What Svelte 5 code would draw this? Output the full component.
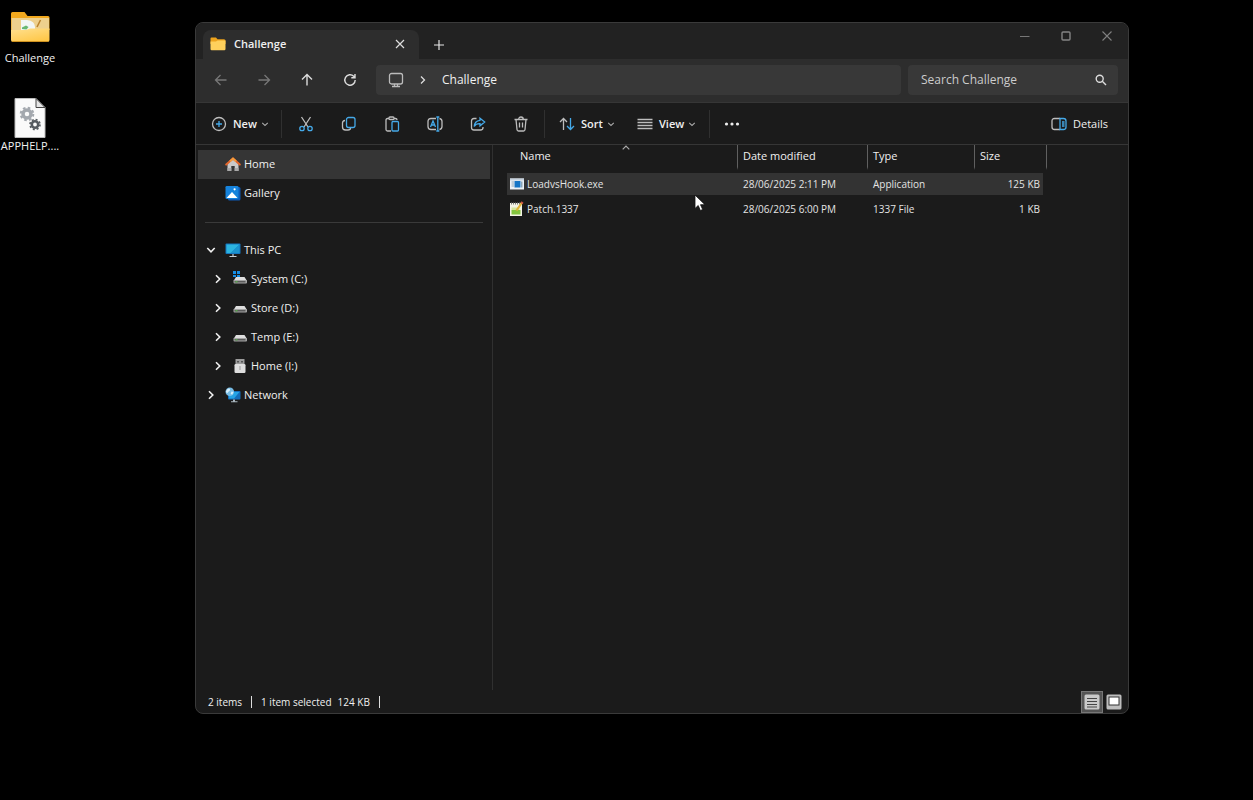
<script>
  let query = $state('');
  const drives = [
    { name: 'System (C:)', kind: 'system' },
    { name: 'Store (D:)', kind: 'drive' },
    { name: 'Temp (E:)', kind: 'drive' },
    { name: 'Home (I:)', kind: 'usb' }
  ];
  const files = [
    { name: 'LoadvsHook.exe', date: '28/06/2025 2:11 PM', type: 'Application', size: '125 KB', kind: 'exe' },
    { name: 'Patch.1337', date: '28/06/2025 6:00 PM', type: '1337 File', size: '1 KB', kind: 'note' }
  ];
  let selected = $state(0);
</script>

{#snippet chevron(dir)}
  <svg class="chev" width="10" height="10" viewBox="0 0 10 10" fill="none" stroke="currentColor" stroke-width="1.6">
    {#if dir === 'down'}<path d="M1.3 3 5 6.8 8.7 3" />{:else}<path d="M3 1.3 6.8 5 3 8.7" />{/if}
  </svg>
{/snippet}

{#snippet smallChevron()}
  <svg width="8" height="8" viewBox="0 0 8 8" fill="none" stroke="#aaa" stroke-width="1.1"><path d="M1.2 2.8 4 5.4 6.8 2.8" /></svg>
{/snippet}

{#snippet placeIcon(kind)}
  <svg width="16" height="16" viewBox="0 0 16 16">
    {#if kind === 'home'}
      <path d="M2.5 7.5 8 3l5.500 4.500V15H9.700V10H6.300V15H2.500Z" fill="#c9c9c9" />
      <path d="M2.500 12h3.800v3H2.500ZM9.700 12h3.800v3H9.700Z" fill="#a9a9a9" />
      <path d="M1.200 8.600 8 2.500l6.800 6.100" fill="none" stroke="#e2652b" stroke-width="2" stroke-linecap="round" />
      <path d="M5 5.200 8 2.500l3 2.700" fill="none" stroke="#f59a3c" stroke-width="2" />
    {:else if kind === 'gallery'}
      <rect x="3" y="2" width="12.500" height="13.500" rx="1.500" fill="#0d5bb8" />
      <rect x="0.500" y="1" width="13" height="13" rx="1.300" fill="#1683dc" />
      <path d="M1.500 13 7 7l5.500 6Z" fill="#fff" /><circle cx="9.600" cy="4.300" r="1.100" fill="#fff" />
    {:else if kind === 'pc'}
      <rect x="0.500" y="1.500" width="15" height="10.500" rx="1" fill="#1577c0" />
      <path d="M1.500 2.500h13L10 7 6 11H1.500Z" fill="#2cb4e0" /><path d="M14.500 2.500 5.500 11h9Z" fill="#1b94cf" />
      <path d="M7 12h2v2H7Z" fill="#7b8790" /><path d="M4.500 14h7v1h-7Z" fill="#c7d0d6" />
    {:else if kind === 'net'}
      <rect x="3" y="4" width="12.500" height="8.500" rx="1" fill="#126dbb" />
      <path d="M4 5h10.500L9 11.500H4Z" fill="#25a4e6" />
      <path d="M8 12.500h2v2H8ZM6 14.300h6.500v1H6Z" fill="#a9b6bf" />
      <circle cx="4.800" cy="4.800" r="4.300" fill="#77bce5" /><path d="M2 2.500c2-1.500 3-1 3 .5S3.500 4 2.800 5.500.8 5 1 4.500ZM6.500 4.500l2 .5-1.300 2.800-1.500-1Z" fill="#d6effc" />
    {:else if kind === 'usb'}
      <rect x="3.500" y="1" width="9" height="6" fill="#9c9c9c" /><path d="M5 3h2v1.500H5ZM9 3h2v1.500H9Z" fill="#555" />
      <rect x="2.500" y="6" width="11" height="9" rx="1.200" fill="#dedede" /><path d="M8 8v4" stroke="#999" />
    {:else}
      {#if kind === 'system'}<path d="M1 0h3v3H1ZM5 0h3v3H5ZM1 4h3v2H1ZM5 4h3v2H5Z" fill="#168ee6" />{/if}
      <path d="M4 6h8.500l2.500 4H1.500Z" fill="#dedede" />
      <rect x="1.500" y="9" width="13.500" height="3.500" rx="1" fill="#a6a6a6" />
      <path d="M2.500 10h11v1.500h-11Z" fill="#5a5a5a" /><path d="M3.500 10h2v1.500h-2Z" fill="#58a34d" />
    {/if}
  </svg>
{/snippet}

<main class="desktop">
  <div class="shortcuts">
    <button class="shortcut">
      <svg width="40" height="40" viewBox="0 0 40 40">
        <path d="M1 3.500Q1 2 2.500 2h12l3 4H38q1.500 0 1.500 1.500V20H1Z" fill="#f2a81d" />
        <rect x="1.500" y="8" width="37.500" height="20" fill="#eed08d" />
        <path d="M11 10h6q8 1 8 7v4H11Z" fill="#f2f6f5" /><path d="M12 17.500l4-2 2.500 1.500-2 2.500-4.500-.5Z" fill="#68b873" />
        <path d="m27 17 3.500-7" stroke="#b9822c" stroke-width="1.500" />
        <path d="M1 20h15l4-1.500h19.500V30q0 2-2 2h-34.500Q1 32 1 30Z" fill="url(#deskfolder)" />
        <path d="M2 31.500h36" stroke="#cf9220" />
        <defs><linearGradient id="deskfolder" x2="0.600" y2="1"><stop stop-color="#ffe08f" /><stop offset="1" stop-color="#ffc84a" /></linearGradient></defs>
      </svg>
      <span>Challenge</span>
    </button>
    <button class="shortcut">
      <svg width="32" height="40" viewBox="0 0 32 40">
        <path d="M1 .5h21l9 9v30H1Z" fill="#fafafa" stroke="#bbb" />
        <path d="M22 .5 31 9.500h-9Z" fill="#e6e6e6" stroke="#444" />
        <circle cx="13" cy="16" r="4" fill="none" stroke="#a3a8ae" stroke-width="3.500" />
        <circle cx="13" cy="16" r="6.300" fill="none" stroke="#a3a8ae" stroke-width="2" stroke-dasharray="2.600 2.350" />
        <circle cx="21" cy="26.500" r="3.200" fill="none" stroke="#555b60" stroke-width="2.600" />
        <circle cx="21" cy="26.500" r="5" fill="none" stroke="#555b60" stroke-width="1.600" stroke-dasharray="2 1.930" />
      </svg>
      <span>APPHELP....</span>
    </button>
  </div>

  <section class="window" aria-label="File Explorer">
    <header class="titlebar">
      <div class="tab">
        <svg width="16" height="14" viewBox="0 0 16 14"><path d="M.5 1.500Q.5.500 1.500.500H6L7.500 2.300H14q1.500 0 1.500 1.500V7H.5Z" fill="#eda31d" /><path d="M.5 4.500H6L7.500 3.500H15.500V12q0 1.200-1.200 1.200H1.700Q.5 13.200.5 12Z" fill="#ffd05c" /></svg>
        <strong>Challenge</strong>
        <button class="plain" aria-label="Close tab"><svg width="10" height="10" viewBox="0 0 10 10" stroke="#ddd" stroke-width="1.200"><path d="m1 1 8 8M9 1 1 9" /></svg></button>
      </div>
      <button class="plain newtab" aria-label="New tab"><svg width="10" height="10" viewBox="0 0 10 10" stroke="#e6e6e6" stroke-width="1.200"><path d="M5 0v10M0 5h10" /></svg></button>
      <div class="controls">
        <button class="plain" aria-label="Minimize"><svg width="10" height="10" viewBox="0 0 10 10"><path d="M0 5.500h9.500" stroke="#777" /></svg></button>
        <button class="plain" aria-label="Maximize"><svg width="10" height="10" viewBox="0 0 10 10"><rect x="1" y="1" width="8" height="8" rx="1" fill="none" stroke="#858585" stroke-width="1.400" /></svg></button>
        <button class="plain" aria-label="Close"><svg width="10" height="10" viewBox="0 0 10 10"><path d="m.5.500 9 9M9.500.500l-9 9" stroke="#808080" stroke-width="1.100" /></svg></button>
      </div>
    </header>

    <div class="navbar">
      <div class="arrows">
        <button class="plain" aria-label="Back"><svg width="14" height="14" viewBox="0 0 14 14" class="line dim"><path d="M12.500 7H1.500M6.500 2l-5 5 5 5" /></svg></button>
        <button class="plain" aria-label="Forward"><svg width="14" height="14" viewBox="0 0 14 14" class="line dim"><path d="M1.500 7h11M7.500 2l5 5-5 5" /></svg></button>
        <button class="plain" aria-label="Up"><svg width="14" height="14" viewBox="0 0 14 14" class="line bright"><path d="M7 12.500V1.500M2 6.500l5-5 5 5" /></svg></button>
        <button class="plain" aria-label="Refresh"><svg width="14" height="14" viewBox="0 0 14 14" class="line bright"><path d="M12.200 7A5.200 5.200 0 1 1 10.700 3.300L12 4.600M12 1v3.700H8.300" /></svg></button>
      </div>
      <nav class="address" aria-label="Address">
        <svg width="16" height="16" viewBox="0 0 16 16" fill="none" stroke="#bbb" stroke-width="1.300"><rect x="1.500" y="1.500" width="13" height="10.500" rx="2" /><path d="M4 14.500h8M6.500 12v2.500M9.500 12v2.500" /></svg>
        <svg width="8" height="10" viewBox="0 0 8 10" fill="none" stroke="#ddd" stroke-width="1.300"><path d="m2 1.500 3.500 3.500L2 8.500" /></svg>
        <a href="#challenge">Challenge</a>
      </nav>
      <label class="search">
        <input type="text" placeholder="Search Challenge" aria-label="Search Challenge" bind:value={query} />
        <svg width="12" height="12" viewBox="0 0 12 12" fill="none" stroke="#ddd" stroke-width="1.400"><circle cx="4.700" cy="4.700" r="3.500" /><path d="m7.300 7.300 3.700 3.700" /></svg>
      </label>
    </div>

    <div class="toolbar">
      <button class="cmd new"><svg width="16" height="16" viewBox="0 0 16 16" class="line"><circle cx="8" cy="8" r="6.500" /><path d="M8 5v6M5 8h6" class="blue" /></svg>New {@render smallChevron()}</button>
      <i class="sep"></i>
      <div class="tools">
        <button class="plain" aria-label="Cut"><svg width="16" height="16" viewBox="0 0 16 16" class="line"><path d="m3.500 1 6.500 10M12.500 1 6 11" /><g class="blue"><circle cx="4" cy="12.500" r="2.200" /><circle cx="12" cy="12.500" r="2.200" /></g></svg></button>
        <button class="plain" aria-label="Copy"><svg width="16" height="16" viewBox="0 0 16 16" class="line"><path d="M4 4.500Q1.500 4.500 1.500 7v4Q1.500 14 4.500 14H7q2.500 0 2.500-2" /><rect x="5.500" y="1.500" width="8.500" height="10" rx="2" class="blue" /></svg></button>
        <button class="plain" aria-label="Paste"><svg width="16" height="16" viewBox="0 0 16 16" class="line"><path d="M5 2.500H3.500Q2 2.500 2 4v9.500Q2 15 3.500 15H7M10 2.500h1.500Q13 2.500 13 4" /><rect x="5" y="1" width="5" height="2.500" rx="1" /><rect x="8" y="5.500" width="6.500" height="9.500" rx="1" class="blue" /></svg></button>
        <button class="plain" aria-label="Rename"><svg width="16" height="16" viewBox="0 0 16 16" class="line"><path d="M9 2.500H4Q1 2.500 1 5.500v5q0 3 3 3h5M12.500 2.500q2.500.5 2.500 3v5q0 2.500-2.500 3" /><path d="M3.500 11 6 5l2.500 6M4.500 9h3M10.800 1v14M9.300 1h3M9.300 15h3" class="blue" /></svg></button>
        <button class="plain" aria-label="Share"><svg width="16" height="16" viewBox="0 0 16 16" class="line"><path d="M6.500 2.500H4Q1.500 2.500 1.500 5v6.500Q1.500 14 4 14h6.500q2.500 0 2.500-2.500V11" /><path d="M10 2.200 14.700 6 10 9.800V7.700Q6 7.500 4.200 10.500 4.500 5 10 4.300Z" class="blue" /></svg></button>
        <button class="plain" aria-label="Delete"><svg width="16" height="16" viewBox="0 0 16 16" class="line"><path d="M1.500 3.500h13M5.700 3.500Q5.700 1 8 1t2.300 2.500M3 3.500l1 10Q4.100 15 5.500 15h5q1.400 0 1.500-1.500l1-10M6.500 6.500v5M9.500 6.500v5" /></svg></button>
      </div>
      <i class="sep"></i>
      <button class="cmd sort"><svg width="16" height="16" viewBox="0 0 16 16" class="line"><path d="M4.500 14V2.500M1 6l3.500-3.500L8 6" /><path d="M11.500 2v11.500M8 10l3.500 3.500L15 10" class="blue" /></svg>Sort {@render smallChevron()}</button>
      <button class="cmd view"><svg width="16" height="16" viewBox="0 0 16 16" class="line"><path d="M0.500 3.500h15M0.500 6.500h15M0.500 9.500h15M0.500 12.500h15" /></svg>View {@render smallChevron()}</button>
      <i class="sep"></i>
      <button class="plain more" aria-label="See more"><svg width="16" height="4" viewBox="0 0 16 4" fill="#eee"><circle cx="2.500" cy="2" r="1.600" /><circle cx="8" cy="2" r="1.600" /><circle cx="13.500" cy="2" r="1.600" /></svg></button>
      <button class="cmd details"><svg width="16" height="16" viewBox="0 0 16 16" class="line"><path d="M9 2.500H3.500Q1 2.500 1 5v6q0 2.500 2.500 2.500H9" /><path d="M9 2.500h3.500Q15 2.500 15 5v6q0 2.500-2.500 2.500H9ZM11 6h2.500M11 8h2.500M11 10h2.500" class="blue" /></svg>Details</button>
    </div>

    <div class="body">
      <nav class="sidebar" aria-label="Navigation pane">
        <a class="place current" href="#home"><span class="twist"></span>{@render placeIcon('home')}Home</a>
        <a class="place" href="#gallery"><span class="twist"></span>{@render placeIcon('gallery')}Gallery</a>
        <hr />
        <a class="place" href="#pc"><span class="twist">{@render chevron('down')}</span>{@render placeIcon('pc')}This PC</a>
        {#each drives as d}
          <a class="place nested" href="#drive"><span class="twist">{@render chevron('right')}</span>{@render placeIcon(d.kind)}{d.name}</a>
        {/each}
        <a class="place" href="#network"><span class="twist">{@render chevron('right')}</span>{@render placeIcon('net')}Network</a>
      </nav>

      <div class="files">
        <svg class="sorted" width="8" height="5" viewBox="0 0 8 5" fill="none" stroke="#aaa" stroke-width="1.200"><path d="M.7 4.300 4 1l3.300 3.300" /></svg>
        <table>
          <colgroup><col class="c-name" /><col class="c-date" /><col class="c-type" /><col class="c-size" /></colgroup>
          <thead><tr><th>Name</th><th>Date modified</th><th>Type</th><th>Size</th></tr></thead>
          <tbody>
            {#each files as f, i}
              <tr class:selected={selected === i} onclick={() => (selected = i)}>
                <td>
                  <div class="file">
                    <svg width="16" height="16" viewBox="0 0 16 16">
                      {#if f.kind === 'exe'}
                        <rect x="1" y="2.500" width="14" height="11" fill="#eef2f6" /><path d="M1 2.500h14v2H1Z" fill="#c6d2dd" />
                        <path d="M2.500 5.500h2.500v1H2.500ZM2.500 7.500h2.500v1H2.500ZM2.500 9.500h2.500v1H2.500ZM12 5.500h1.500v6H12Z" fill="#8ca5b8" /><rect x="5.500" y="5" width="6" height="6.500" fill="#1675c5" />
                      {:else}
                        <rect x="1" y="2" width="12" height="13" fill="#f3f3e4" /><path d="M2 2.500h10" stroke="#777" stroke-width="2" stroke-dasharray="1 1" />
                        <path d="M2.500 9h9v4.500h-9Z" fill="#83c43d" /><path d="M2.500 6.500h8V9h-8Z" fill="#d5e69a" />
                        <path d="m7.500 9.500 5.500-8" stroke="#e0b33a" stroke-width="2.200" /><path d="m12.500 2.500 1-1.500" stroke="#cf5346" stroke-width="2.400" />
                      {/if}
                    </svg>{f.name}
                  </div>
                </td>
                <td>{f.date}</td><td>{f.type}</td><td>{f.size}</td>
              </tr>
            {/each}
          </tbody>
        </table>
        <svg class="pointer" width="12" height="18" viewBox="0 0 12 18"><path d="M1 1v13.500l3.200-3 2.200 5 2.300-1-2.200-4.800h4.500Z" fill="#fff" stroke="#111" stroke-width=".8" /></svg>
      </div>
    </div>

    <footer class="status">
      <span>2 items</span><i></i><span>1 item selected</span><span class="total">124 KB</span><i></i>
      <div class="modes">
        <button class="plain mode on" aria-label="Details view"><svg width="16" height="16" viewBox="0 0 16 16"><rect x="0.500" y="0.500" width="15" height="15" rx="1.500" fill="#c9c9c9" /><path d="M3 4.500h10M3 7.500h10M3 10.500h10M3 13h10" stroke="#444" /></svg></button>
        <button class="plain mode" aria-label="Thumbnail view"><svg width="16" height="16" viewBox="0 0 16 16"><rect x="0.500" y="0.500" width="15" height="15" rx="1.500" fill="#bdbdbd" /><rect x="3" y="3" width="10" height="8" fill="#fff" stroke="#333" /></svg></button>
      </div>
    </footer>
  </section>
</main>

<style>
  :global(body) { margin: 0; background: #000; }
  * { box-sizing: border-box; }
  svg { display: block; flex: none; }
  .desktop {
    display: grid; grid-template-columns: 195px minmax(0, 1fr); min-height: 100vh;
    padding: 22px 124px 86px 0; background: #000; color: #f0f0f0;
    font: 11px/16px "Open Sans", "Noto Sans", sans-serif;
  }
  button { font: inherit; color: inherit; background: none; border: 0; padding: 0; }
  a { color: inherit; text-decoration: none; }
  .plain { display: flex; align-items: center; justify-content: center; }
  .shortcuts { display: flex; flex-direction: column; gap: 32px; width: 60px; margin-top: -12px; }
  .shortcut { display: flex; flex-direction: column; align-items: center; height: 56px; }
  .window {
    display: flex; flex-direction: column; overflow: hidden;
    background: #1b1b1b; border: 1px solid #3a3a3a; border-radius: 8px;
  }
  .titlebar { display: flex; height: 36px; background: #222; flex: none; }
  .tab {
    display: flex; align-items: center; gap: 8px; width: 216px; margin: 7px 0 0 7px; padding: 0 8px 1px 7px;
    background: #2d2d2d; border-radius: 8px 8px 0 0;
  }
  .tab strong { flex: 1; font-weight: 600; }
  .tab button { width: 22px; height: 22px; }
  .newtab { width: 40px; margin-top: 7px; }
  .controls { display: flex; margin-left: auto; height: 26px; padding-right: 1px; }
  .controls button { width: 41px; }
  .navbar {
    display: flex; align-items: center; gap: 5px; height: 44px; padding: 0 10px 1px 3px; flex: none;
    background: #2d2d2d; border-bottom: 1px solid #363636;
  }
  .arrows { display: flex; width: 172px; }
  .arrows button { width: 43px; height: 30px; }
  .line { fill: none; stroke: #bdbdbd; stroke-width: 1.3; }
  .dim { stroke: #777; }
  .bright { stroke: #ddd; stroke-width: 1.4; }
  .blue { stroke: #45a9e8; }
  .address {
    display: flex; align-items: center; flex: 1; height: 30px; padding: 0 12px; background: #383838;
    border-radius: 4px; font-size: 12px; font-weight: 500; gap: 15px; margin-right: 2px;
  }
  .search { display: flex; align-items: center; width: 210px; height: 30px; padding: 0 11px 0 13px; background: #383838; border-radius: 4px; }
  .search input { flex: 1; min-width: 0; padding: 0; border: 0; outline: 0; background: none; color: #ddd; font: inherit; font-size: 12px; }
  .search input::placeholder { color: #ccc; opacity: 1; }
  .toolbar { display: flex; align-items: center; height: 42px; padding: 0 20px 0 15px; flex: none; border-bottom: 1px solid #363636; }
  .cmd { display: flex; align-items: center; gap: 4px; font-weight: 600; }
  .cmd svg:first-child { margin-right: 2px; }
  .new { width: 70px; }
  .sep { width: 1px; height: 28px; background: #303030; }
  .tools { display: flex; padding: 0 2px; }
  .tools button { width: 43px; height: 30px; }
  .sort { width: 78px; margin-left: 14px; }
  .view { width: 72px; }
  .more { width: 43px; height: 30px; }
  .details { margin-left: auto; font-weight: 500; }
  .body { display: flex; flex: 1; min-height: 0; }
  .sidebar { width: 297px; padding: 5px 2px; border-right: 1px solid #303030; flex: none; font-weight: 500; }
  .place { display: flex; align-items: center; height: 29px; padding: 0 0 2px 8px; gap: 3px; }
  .place.nested { padding-left: 15px; }
  .current { background: #353535; }
  .twist { display: flex; width: 16px; }
  .sidebar hr { height: 1px; border: 0; background: #3a3a3a; margin: 14px 7px 13px; }
  .files { flex: 1; min-width: 0; padding-left: 14px; position: relative; }
  .sorted { position: absolute; left: 129px; top: 0; }
  .pointer { position: absolute; left: 201px; top: 49px; }
  table { width: 540px; table-layout: fixed; border-collapse: separate; border-spacing: 0 3px; margin-top: -3px; }
  .c-name { width: 231px; }
  .c-date { width: 130px; }
  .c-type { width: 107px; }
  .c-size { width: 72px; }
  th { height: 25px; padding: 0 5px; font-weight: 400; text-align: left; border-right: 1px solid #606060; border-bottom: 3px solid transparent; }
  th:first-child { padding-left: 13px; }
  td { height: 22px; padding: 0 5px; white-space: nowrap; color: #e4e4e4; font-size: 10px; font-weight: 500; }
  td:first-child { padding: 0 2px; }
  td:last-child { padding: 0 3px; text-align: right; border-right: 4px solid transparent; background-clip: padding-box; }
  .selected td { background-color: #333; }
  .file { display: flex; align-items: center; gap: 2px; }
  .status { display: flex; align-items: center; gap: 9px; height: 23px; padding: 0 3px 0 12px; flex: none; font-size: 10px; font-weight: 500; }
  .status i { width: 1px; height: 12px; background: #ddd; }
  .status .total { margin-left: -3px; }
  .modes { display: flex; margin-left: auto; }
  .mode { width: 22px; height: 22px; }
  .mode.on { background: #555; border: 1px solid #777; }
</style>
